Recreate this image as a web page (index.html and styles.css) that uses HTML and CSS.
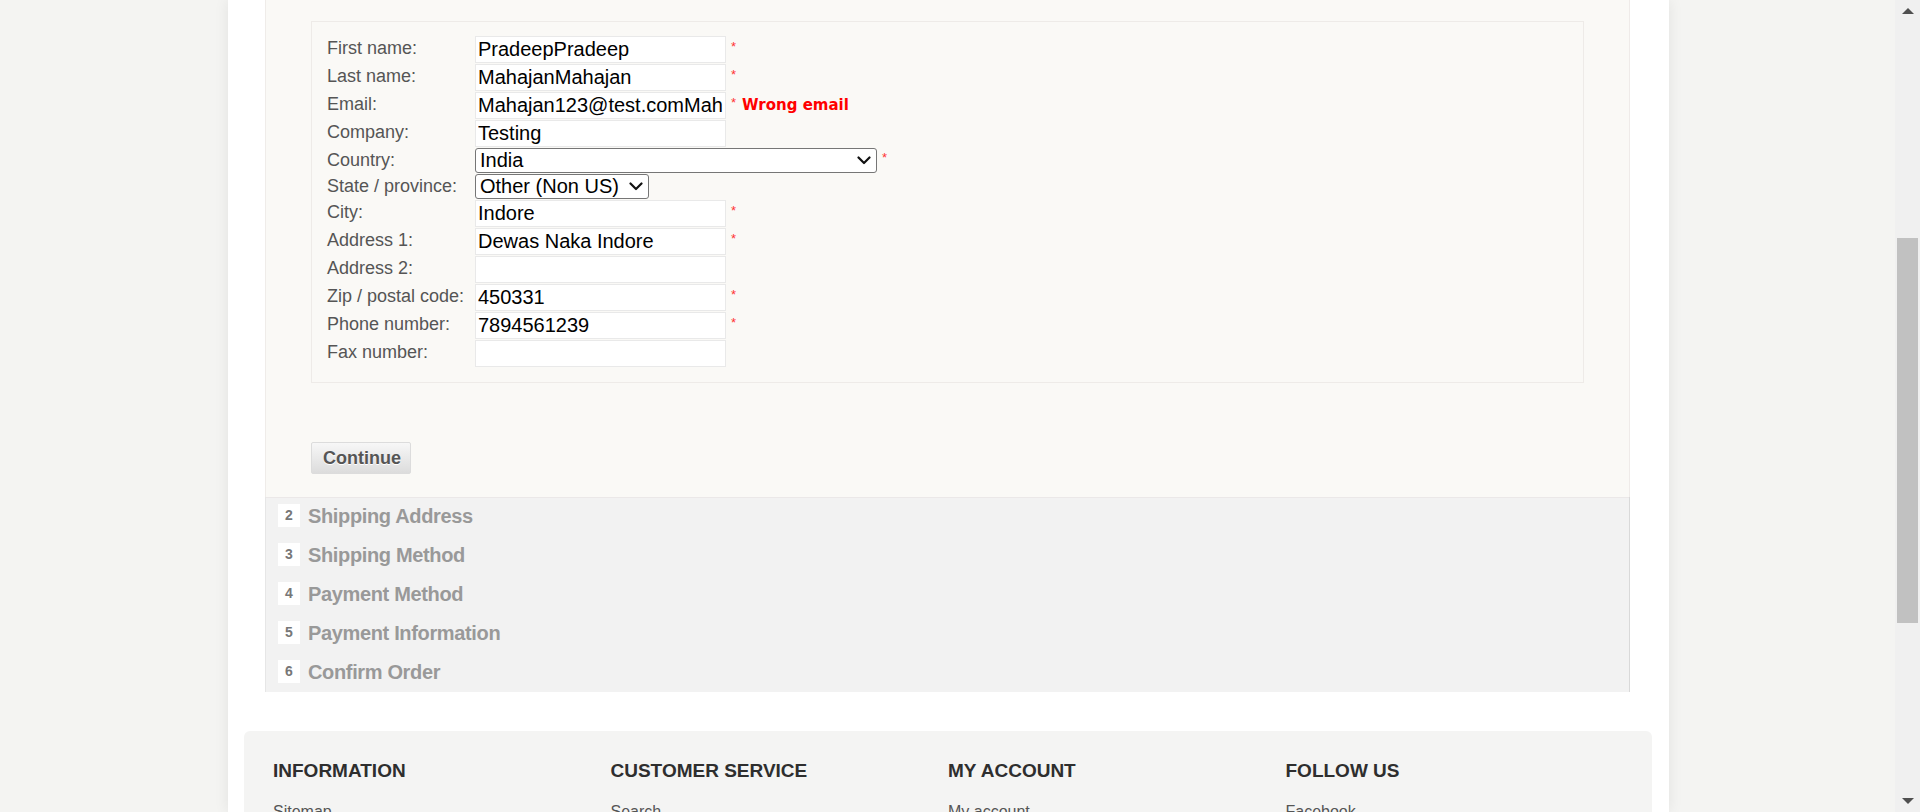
FILE: index.html
```html
<!DOCTYPE html>
<html lang="en">
<head>
<meta charset="utf-8">
<title>Checkout</title>
<link rel="stylesheet" href="styles.css">
</head>
<body>
<div class="layout">
  <div class="viewport">
    <div class="page">
      <div class="opc">
        <div class="step-billing">
          <div class="fieldset">
            <div class="row"><label class="lbl">First name:</label><input class="txt" type="text" value="PradeepPradeep"><span class="req">*</span></div>
            <div class="row"><label class="lbl">Last name:</label><input class="txt" type="text" value="MahajanMahajan"><span class="req">*</span></div>
            <div class="row"><label class="lbl">Email:</label><input class="txt" type="text" value="Mahajan123@test.comMahajan123@test.com"><span class="req">*</span><span class="err">Wrong email</span></div>
            <div class="row"><label class="lbl">Company:</label><input class="txt" type="text" value="Testing"></div>
            <div class="row row-sel"><label class="lbl">Country:</label><span class="selwrap"><select class="sel sel-country"><option>India</option></select><svg class="chev" width="14" height="9" viewBox="0 0 14 9"><polyline points="1.5,1.5 7,7 12.5,1.5" fill="none" stroke="#111" stroke-width="2.2" stroke-linecap="round" stroke-linejoin="round"/></svg></span><span class="req req-sel">*</span></div>
            <div class="row row-sel"><label class="lbl">State / province:</label><span class="selwrap"><select class="sel sel-state"><option>Other (Non US)</option></select><svg class="chev" width="14" height="9" viewBox="0 0 14 9"><polyline points="1.5,1.5 7,7 12.5,1.5" fill="none" stroke="#111" stroke-width="2.2" stroke-linecap="round" stroke-linejoin="round"/></svg></span></div>
            <div class="row"><label class="lbl">City:</label><input class="txt" type="text" value="Indore"><span class="req">*</span></div>
            <div class="row"><label class="lbl">Address 1:</label><input class="txt" type="text" value="Dewas Naka Indore"><span class="req">*</span></div>
            <div class="row"><label class="lbl">Address 2:</label><input class="txt" type="text" value=""></div>
            <div class="row"><label class="lbl">Zip / postal code:</label><input class="txt" type="text" value="450331"><span class="req">*</span></div>
            <div class="row"><label class="lbl">Phone number:</label><input class="txt" type="text" value="7894561239"><span class="req">*</span></div>
            <div class="row"><label class="lbl">Fax number:</label><input class="txt" type="text" value=""></div>
          </div>
          <div class="btn-row"><button class="btn-continue" type="button">Continue</button></div>
        </div>
        <div class="steps">
          <div class="step"><span class="num">2</span><span class="step-title">Shipping Address</span></div>
          <div class="step"><span class="num">3</span><span class="step-title">Shipping Method</span></div>
          <div class="step"><span class="num">4</span><span class="step-title">Payment Method</span></div>
          <div class="step"><span class="num">5</span><span class="step-title">Payment Information</span></div>
          <div class="step"><span class="num">6</span><span class="step-title">Confirm Order</span></div>
        </div>
      </div>
      <div class="footer">
        <div class="fcol">
          <div class="fhead">INFORMATION</div>
          <ul class="flist"><li>Sitemap</li><li>Shipping &amp; returns</li><li>Privacy notice</li></ul>
        </div>
        <div class="fcol">
          <div class="fhead">CUSTOMER SERVICE</div>
          <ul class="flist"><li>Search</li><li>News</li><li>Blog</li></ul>
        </div>
        <div class="fcol">
          <div class="fhead">MY ACCOUNT</div>
          <ul class="flist"><li>My account</li><li>Orders</li><li>Addresses</li></ul>
        </div>
        <div class="fcol">
          <div class="fhead">FOLLOW US</div>
          <ul class="flist"><li>Facebook</li><li>Twitter</li><li>RSS</li></ul>
        </div>
      </div>
    </div>
  </div>
  <div class="scrollbar">
    <div class="sb-btn"><svg width="12" height="6" viewBox="0 0 12 6"><polygon points="0,6 6,0 12,6" fill="#505050"/></svg></div>
    <div class="sb-thumb"></div>
    <div class="sb-fill"></div>
    <div class="sb-btn"><svg width="12" height="6" viewBox="0 0 12 6"><polygon points="0,0 12,0 6,6" fill="#505050"/></svg></div>
  </div>
</div>
</body>
</html>
```

FILE: styles.css
```css
* { box-sizing: border-box; }
html, body { margin: 0; padding: 0; height: 100%; overflow: hidden; }
body {
  background: #f4f4f2;
  font-family: "Liberation Sans", Arial, sans-serif;
}
.layout { display: flex; height: 812px; }
.viewport { flex: 1; overflow: hidden; }
.page {
  width: 1441px;
  margin-left: 228px;
  height: 812px;
  background: #fff;
  box-shadow: 0 0 14px rgba(0, 0, 0, 0.08);
  overflow: hidden;
}
.opc { margin: 0 39px 0 37px; }
.step-billing {
  background: #faf9f6;
  border-left: 1px solid #efece9;
  border-right: 1px solid #efebe9;
  padding: 21px 45px 23px 45px;
}
.fieldset {
  border: 1px solid #eeebe8;
  padding: 14px 15px 14px 15px;
}
.row { display: flex; align-items: flex-start; height: 28px; }
.row-sel { height: 26px; }
.lbl {
  width: 148px;
  flex: none;
  font-size: 18px;
  line-height: 24px;
  color: #555;
}
.txt {
  width: 251px;
  height: 27px;
  margin: 0;
  border: 1px solid #e9e9e9;
  background: #fff;
  padding: 0 2px;
  font-family: "Liberation Sans", Arial, sans-serif;
  font-size: 20px;
  color: #000;
  outline: none;
}
.selwrap { position: relative; display: block; height: 25px; }
.sel {
  display: block;
  height: 25px;
  margin: 0;
  padding: 0 24px 0 4px;
  -webkit-appearance: none;
  appearance: none;
  font-family: "Liberation Sans", Arial, sans-serif;
  font-size: 20px;
  line-height: 23px;
  color: #000;
  background: #fff;
  border: 1px solid #767676;
  border-radius: 3px;
}
.chev {
  position: absolute;
  right: 6px;
  top: 8px;
  pointer-events: none;
}
.sel-country { width: 402px; }
.sel-state { width: 174px; }
.req {
  margin-left: 5px;
  padding-top: 1px;
  font-size: 13px;
  line-height: 20px;
  color: #f33;
}
.req-sel { padding-top: 0; }
.err {
  margin-left: 6px;
  padding-top: 3px;
  font-family: "DejaVu Sans", Verdana, sans-serif;
  font-weight: bold;
  font-size: 15px;
  line-height: 21px;
  color: #f00;
}
.btn-row { margin-top: 59px; }
.btn-continue {
  display: block;
  width: 100px;
  height: 32px;
  padding: 0 0 0 11px;
  text-align: left;
  border: 1px solid #dcdcdc;
  border-radius: 2px;
  background: linear-gradient(#f7f7f7, #dcdcdc);
  font-family: "Liberation Sans", Arial, sans-serif;
  font-weight: bold;
  font-size: 18px;
  color: #555;
  text-shadow: 0 1px 0 #fff;
}
.steps {
  background: #f2f2f2;
  border-left: 1px solid #e6e6e6;
  border-right: 1px solid #d9d9d9;
  box-shadow: inset 0 1px 0 #ebe8e8;
}
.step {
  display: flex;
  align-items: flex-start;
  height: 39px;
}
.num {
  width: 22px;
  height: 23px;
  margin: 7px 0 0 12px;
  background: #fff;
  text-align: center;
  font-weight: bold;
  font-size: 14px;
  line-height: 23px;
  color: #777;
}
.step-title {
  margin-left: 8px;
  font-weight: bold;
  font-size: 20px;
  letter-spacing: -0.35px;
  line-height: 39px;
  color: #999;
}
.footer {
  margin: 39px 17px 0 16px;
  background: #f4f4f3;
  border-radius: 6px 6px 0 0;
  padding: 29px 29px 20px 29px;
  display: grid;
  grid-template-columns: repeat(4, 1fr);
}
.fhead {
  font-weight: bold;
  font-size: 19px;
  line-height: 22px;
  color: #2e2e2e;
  margin-bottom: 19px;
}
.flist { list-style: none; margin: 0; padding: 0; }
.flist li {
  font-size: 16px;
  line-height: 22px;
  color: #555;
  margin-bottom: 8px;
}
.scrollbar {
  width: 25px;
  flex: none;
  background: #f0f0f0;
  display: flex;
  flex-direction: column;
  align-items: center;
}
.sb-btn {
  height: 22px;
  width: 25px;
  display: flex;
  align-items: center;
  justify-content: center;
}
.sb-thumb {
  margin-top: 216px;
  width: 21px;
  height: 385px;
  background: #c1c1c1;
}
.sb-fill { flex: 1; }
```
